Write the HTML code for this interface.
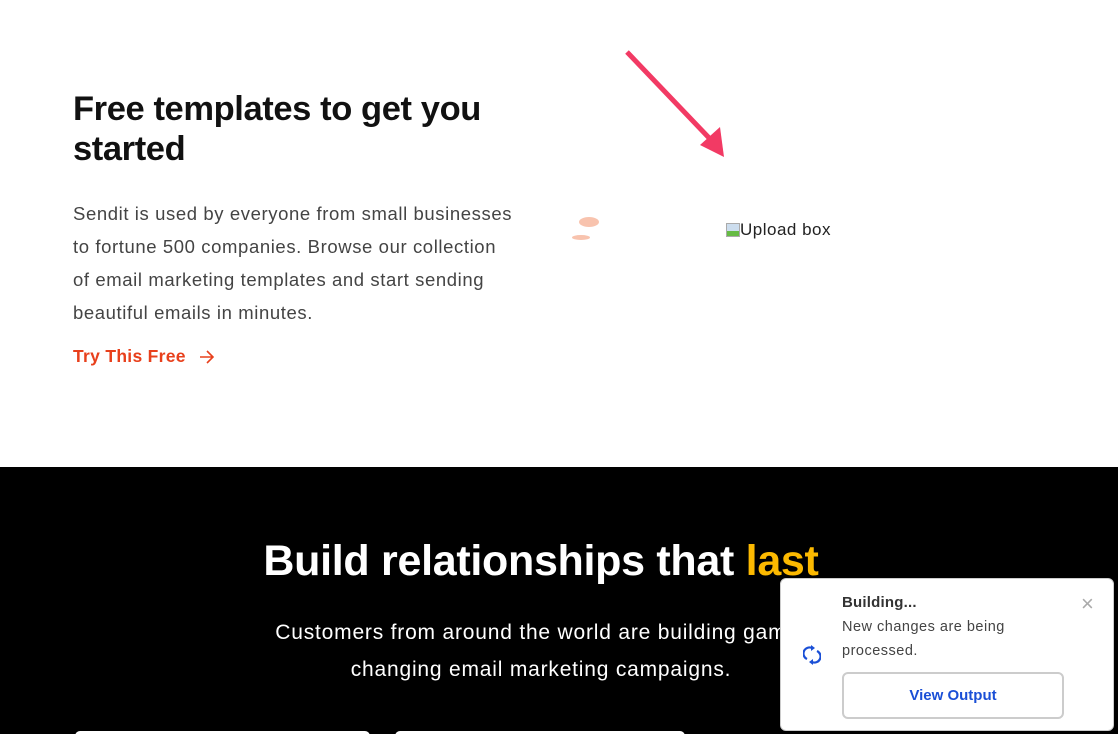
<!DOCTYPE html>
<html><head><style>
*{margin:0;padding:0;box-sizing:border-box}
body{width:1118px;height:734px;overflow:hidden;background:#fff;font-family:"Liberation Sans",sans-serif;position:relative}
.a{position:absolute}
h1{position:absolute;left:73px;top:89px;font-size:34.5px;line-height:40px;font-weight:bold;color:#111;letter-spacing:-0.4px;width:460px}
.p{left:73px;top:197px;font-size:18.5px;line-height:33px;color:#444;width:442px;letter-spacing:0.6px}
.l{left:73px;top:346px;font-size:17.5px;font-weight:bold;color:#e8401c;letter-spacing:0.3px}
.dark{left:0;top:467px;width:1118px;height:267px;background:#000}
.h2{left:0;width:1082px;top:537px;text-align:center;font-size:43px;font-weight:bold;color:#fff;letter-spacing:-0.3px}
.sub{left:0;width:1082px;top:614px;text-align:center;font-size:21px;line-height:37px;color:#fff;letter-spacing:0.8px}
.toast{left:780px;top:578px;width:334px;height:153px;background:#fff;border:1px solid #ccc;border-radius:6px}
.btn{left:61px;top:93px;width:222px;height:47px;border:2px solid #ccc;border-radius:6px;text-align:center;line-height:43px;color:#1a4fd6;font-weight:bold;font-size:15px}
</style></head><body>
<h1>Free templates to get you started</h1>
<div class="a p">Sendit is used by everyone from small businesses<br>to fortune 500 companies. Browse our collection<br>of email marketing templates and start sending<br>beautiful emails in minutes.</div>
<div class="a l">Try This Free</div>
<svg class="a" style="left:199px;top:350px" width="16" height="14"><path d="M1 7H14M8 1L14 7L8 13" fill="none" stroke="#e8401c" stroke-width="1.6"/></svg>
<svg class="a" style="left:620px;top:45px" width="110" height="115"><line x1="7" y1="7" x2="92" y2="96" stroke="#f23a64" stroke-width="5"/><polygon points="104,112 80,100 100,82" fill="#f23a64"/></svg>
<div class="a" style="left:579px;top:217px;width:20px;height:10px;background:#f6b49a;border-radius:50%;opacity:.8"></div>
<div class="a" style="left:572px;top:235px;width:18px;height:5px;background:#f6b49a;border-radius:50%;opacity:.8"></div>
<div class="a" style="left:726px;top:220px;font-size:17px;color:#222;letter-spacing:0.5px"><span style="display:inline-block;width:14px;height:14px;border:1px solid #aaa;background:linear-gradient(#cde 60%,#6b4 60%);vertical-align:-2px"></span>Upload box</div>
<div class="a dark"></div>
<div class="a h2">Build relationships that <span style="color:#fcb900">last</span></div>
<div class="a sub">Customers from around the world are building game-<br>changing email marketing campaigns.</div>
<div class="a" style="left:75px;top:731px;width:295px;height:10px;background:#fff;border-radius:8px"></div>
<div class="a" style="left:395px;top:731px;width:290px;height:10px;background:#fff;border-radius:8px"></div>
<div class="a toast">
<div class="a" style="left:61px;top:15px;font-weight:bold;font-size:15px;color:#333;letter-spacing:0.2px">Building...</div>
<div class="a" style="left:61px;top:36px;font-size:14.5px;line-height:24px;color:#444;letter-spacing:0.5px">New changes are being<br>processed.</div>
<div class="a" style="left:300px;top:12px;font-size:22px;color:#aaa">×</div>
<svg class="a" style="left:22px;top:66px" width="18" height="20" viewBox="0 0 18 20"><path d="M4 14 A6 6 0 0 1 9 3" fill="none" stroke="#1a4fd6" stroke-width="2.2"/><polygon points="8,0 12,3 8,6" fill="#1a4fd6"/><path d="M14 6 A6 6 0 0 1 9 17" fill="none" stroke="#1a4fd6" stroke-width="2.2"/><polygon points="10,14 6,17 10,20" fill="#1a4fd6"/></svg>
<div class="a btn">View Output</div>
</div>
</body></html>
